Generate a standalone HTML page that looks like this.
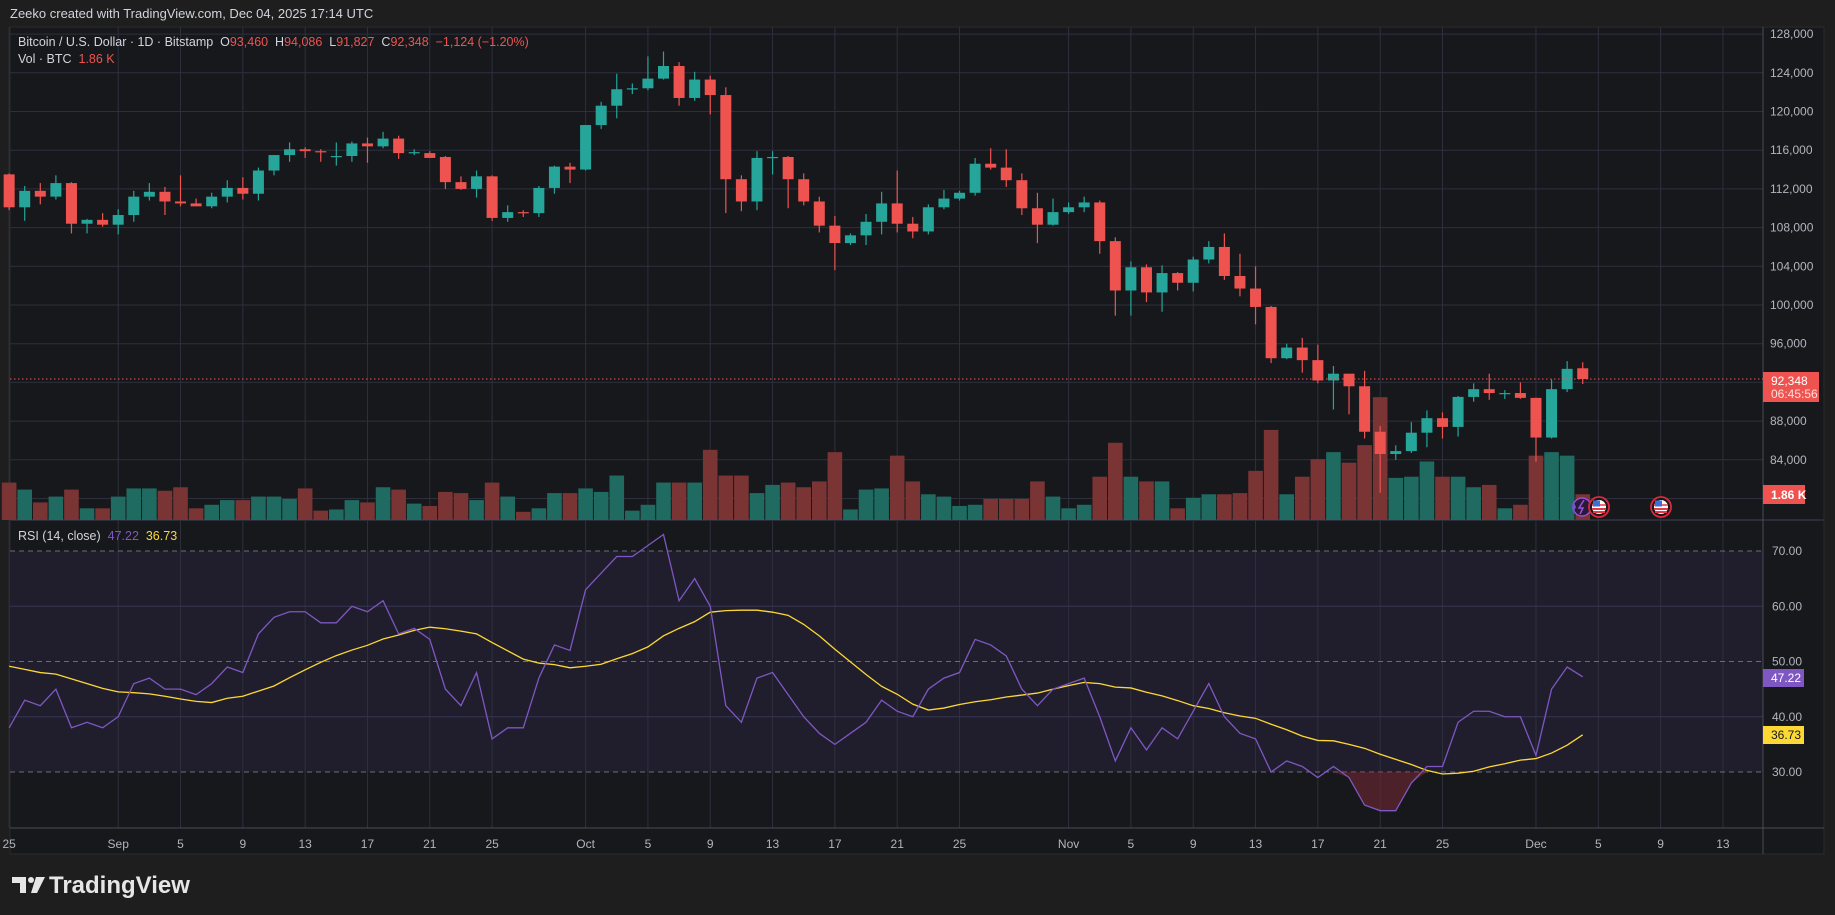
<!DOCTYPE html>
<html><head><meta charset="utf-8"><style>
html,body{margin:0;padding:0;background:#1e1e1e;width:1835px;height:915px;overflow:hidden;font-family:"Liberation Sans",sans-serif}
svg{position:absolute;left:0;top:0}
text{white-space:pre}
</style></head><body>
<svg id="s" width="1835" height="915" xmlns="http://www.w3.org/2000/svg" font-family="Liberation Sans, sans-serif"></svg>
<script>
const S=document.getElementById('s');let h='';
const X=d=>118.2+15.58*d, Y=p=>305+(100000-p*1000)*0.009675, R=v=>551+(70-v)*5.525;
h+='<rect x="0" y="0" width="1835" height="915" fill="#1e1e1e"/>';
h+='<text x="10" y="18" font-size="13" fill="#d1d4dc">Zeeko created with TradingView.com, Dec 04, 2025 17:14 UTC</text>';
h+='<rect x="10" y="27" width="1814" height="827" fill="#17181c" stroke="#2a2b30"/>';
h+=`<rect x="10" y="551" width="1753" height="221" fill="#201e2d"/>`;
const labs=[[-7,'25'],[0,'Sep'],[4,'5'],[8,'9'],[12,'13'],[16,'17'],[20,'21'],[24,'25'],[30,'Oct'],[34,'5'],[38,'9'],[42,'13'],[46,'17'],[50,'21'],[54,'25'],[61,'Nov'],[65,'5'],[69,'9'],[73,'13'],[77,'17'],[81,'21'],[85,'25'],[91,'Dec'],[95,'5'],[99,'9'],[103,'13']];
labs.forEach(([d,t])=>{const x=X(d);h+=`<line x1="${x}" y1="27" x2="${x}" y2="828" stroke="#2e2f3d"/>`;h+=`<text x="${x}" y="848" font-size="12" fill="#b2b5be" text-anchor="middle">${t}</text>`;});
for(let p=84;p<=128;p+=4){const y=Y(p);h+=`<line x1="10" y1="${y}" x2="1763" y2="${y}" stroke="#2e2f3d"/>`;h+=`<text x="1770" y="${y+4}" font-size="12" fill="#b2b5be">${p},000</text>`;}
h+=`<line x1="10" y1="${Y(80)}" x2="1763" y2="${Y(80)}" stroke="#2e2f3d"/>`;
[60,40].forEach(v=>{h+=`<line x1="10" y1="${R(v)}" x2="1763" y2="${R(v)}" stroke="#363452"/>`});
[70,50,30].forEach(v=>{h+=`<line x1="10" y1="${R(v)}" x2="1763" y2="${R(v)}" stroke="#6b6b80" stroke-dasharray="5,4"/>`});
[70,60,50,40,30].forEach(v=>{h+=`<text x="1772" y="${R(v)+4}" font-size="12" fill="#b2b5be">${v}.00</text>`});
h+='<line x1="10" y1="520" x2="1824" y2="520" stroke="#2a2e39" stroke-width="2"/>';
h+='<line x1="10" y1="828" x2="1824" y2="828" stroke="#4a4d57"/>';
h+='<line x1="1763" y1="27" x2="1763" y2="854" stroke="#4a4d57"/>';
const D=`113.5 113.6 109.8 110.1|110.1 112.3 108.7 111.8|111.8 112.6 110.4 111.2|111.2 113.4 110.9 112.6|112.6 112.7 107.4 108.4|108.4 108.9 107.4 108.8|108.8 109.5 108.1 108.3|108.3 109.9 107.3 109.3|109.3 111.8 108.6 111.2|111.2 112.6 110.8 111.7|111.7 112.2 109.3 110.7|110.7 113.4 110.2 110.5|110.5 111 110.2 110.2|110.2 111.6 110 111.2|111.2 112.9 110.6 112.1|112.1 113.2 110.9 111.5|111.5 114.2 110.8 113.9|113.9 115.5 113.4 115.5|115.5 116.8 114.8 116.1|116.1 116.3 115.2 115.9|115.9 116.1 114.8 115.8|115.3 116.8 114.4 115.4|115.4 116.9 114.8 116.7|116.7 117.3 114.7 116.4|116.4 117.9 116.2 117.2|117.2 117.5 115.1 115.7|115.7 116.1 115.5 115.8|115.7 115.9 115.2 115.2|115.3 115.4 112 112.7|112.7 113.3 111.9 112|112 113.9 111.1 113.3|113.3 113.4 108.7 109|109 110.3 108.6 109.6|109.6 109.8 109.1 109.5|109.5 112.3 109.1 112.1|112.1 114.4 111.5 114.3|114.3 114.7 112.6 114|114 118.6 113.9 118.6|118.6 121 118.2 120.6|120.6 123.9 119.3 122.3|122.3 122.9 121.8 122.4|122.4 125.7 122.2 123.4|123.4 126.2 123.3 124.7|124.7 125.1 120.6 121.4|121.4 124.1 121.1 123.3|123.3 123.7 119.7 121.7|121.7 122.5 109.5 113|113 113.4 109.7 110.7|110.7 115.9 109.8 115.2|115.2 115.9 113.5 115.3|115.3 115.4 110 113|113 113.6 110.3 110.7|110.7 111.2 107.5 108.2|108.2 109.2 103.6 106.4|106.4 107.4 106.2 107.2|107.2 109.4 106.2 108.6|108.6 111.7 107.3 110.5|110.5 113.9 107.5 108.4|108.4 109.1 106.9 107.6|107.6 110.4 107.3 110.1|110.1 111.9 109.9 111|111 111.8 110.8 111.6|111.6 115.2 111.3 114.6|114.6 116.2 114 114.2|114.2 116.1 112.2 112.9|112.9 113.6 109.3 110|110 111.6 106.4 108.3|108.3 111 108.2 109.6|109.6 110.6 109.4 110.1|110.1 111.2 109.6 110.6|110.6 110.8 105.3 106.6|106.6 107 98.9 101.5|101.5 104.5 98.9 103.9|103.9 104.2 100.3 101.3|101.3 104.1 99.3 103.3|103.3 103.4 101.5 102.3|102.3 105 101.4 104.7|104.7 106.6 104.3 106|106 107.4 102.6 103|103 105.3 100.9 101.7|101.7 104 98 99.8|99.8 99.9 94 94.5|94.5 96 94.4 95.6|95.6 96.6 93 94.3|94.3 95.9 91.9 92.2|92.2 93.7 89.2 92.9|92.9 92.9 88.7 91.6|91.6 93.2 86.2 86.9|86.9 87.5 80.6 84.6|84.6 85.5 84 84.9|84.9 87.9 84.7 86.8|86.8 89.1 85.3 88.3|88.3 88.9 86.2 87.4|87.4 90.6 86.4 90.5|90.5 91.9 90 91.3|91.3 92.9 90.2 90.9|90.9 91.2 90.3 90.9|90.9 92 90.3 90.4|90.4 90.4 83.8 86.3|86.3 92.3 86.2 91.3|91.3 94.2 91 93.4|93.46 94.086 91.827 92.348`.split('|').map(s=>s.trim().split(/\s+/).map(Number));
const V=[32,26,15,20,26,10,10,20,27,27,25,28,10,13,17,17,20,20,18,27,8,9,17,15,28,26,14,12,24,23,17,32,20,7,10,23,23,27,24,38,8,13,32,32,32,60,38,38,23,30,32,28,33,58,9,26,27,55,33,22,20,12,13,18,18,18,33,20,10,13,37,66,37,33,33,10,19,22,22,23,42,77,22,37,52,58,49,64,105,36,37,50,37,37,28,30,10,13,55,58,55,22];
D.forEach((c,i)=>{const d=i-7,x=X(d);const up=c[3]>=c[0];const hh=V[i]*1.17;h+=`<rect x="${x-7.3}" y="${520-hh}" width="14.6" height="${hh}" fill="${up?'#1f6b61':'#7a3434'}"/>`;});
D.forEach((c,i)=>{const d=i-7,x=X(d);const up=c[3]>=c[0];const col=up?'#26a69a':'#ef5350';
h+=`<line x1="${x}" y1="${Y(c[1])}" x2="${x}" y2="${Y(c[2])}" stroke="${col}" stroke-width="1.2"/>`;
const t=Y(Math.max(c[0],c[3])),b=Y(Math.min(c[0],c[3]));h+=`<rect x="${x-5.5}" y="${t}" width="11" height="${Math.max(1.2,b-t)}" fill="${col}"/>`;});
h+=`<line x1="10" y1="${Y(92.348)}" x2="1763" y2="${Y(92.348)}" stroke="#ef5350" stroke-dasharray="1.5,2.5"/>`;
h+=`<rect x="1763" y="372" width="56" height="30" fill="#ef5350"/><text x="1771" y="385" font-size="12" fill="#fff">92,348</text><text x="1771" y="398" font-size="12" fill="#fde0df">06:45:56</text>`;
h+=`<rect x="1763" y="485" width="42" height="19" fill="#ef5350"/><text x="1771" y="499" font-size="12" font-weight="bold" fill="#fff">1.86 K</text>`;
const RS=[38,43,42,45,38,39,38,40,46,47,45,45,44,46,49,48,55,58,59,59,57,57,60,59,61,55,56,54,45,42,48,36,38,38,47,53,52,63,66,69,69,71,73,61,65,60,42,39,47,48,44,40,37,35,37,39,43,41,40,45,47,48,54,53,51,45,42,45,46,47,40,32,38,34,38,36,41,46,40,37,36,30,32,31,29,31,29,24,23,23,28,31,31,39,41,41,40,40,33,45,49,47.22];
const pad=[52,51,50,49,50,51,50,49,48,50,51,52,50,49];const all=pad.concat(RS);
const MA=RS.map((v,i)=>{let s=0;for(let k=0;k<14;k++)s+=all[i+14-k];return s/14;});
MA[MA.length-1]=36.73;
let pts=[];RS.forEach((v,i)=>{if(i>=85&&i<=92)pts.push([X(i-7),R(Math.min(v,30))]);});
h+=`<path d="M${pts[0][0]},${R(30)} ${pts.map(p=>'L'+p[0]+','+p[1]).join(' ')} L${pts[pts.length-1][0]},${R(30)}Z" fill="#7a2a35" opacity="0.55"/>`;
h+=`<polyline fill="none" stroke="#fdd835" stroke-width="1.3" points="${MA.map((v,i)=>X(i-7)+','+R(v)).join(' ')}"/>`;
h+=`<polyline fill="none" stroke="#7e57c2" stroke-width="1.3" points="${RS.map((v,i)=>X(i-7)+','+R(v)).join(' ')}"/>`;
h+=`<rect x="1763" y="669" width="41" height="18" fill="#7e57c2"/><text x="1771" y="682" font-size="12" fill="#fff">47.22</text>`;
h+=`<rect x="1763" y="726" width="41" height="18" fill="#fdd835"/><text x="1771" y="739" font-size="12" fill="#131722">36.73</text>`;
h+=`<text x="18" y="46" font-size="12.5" fill="#d1d4dc">Bitcoin / U.S. Dollar · 1D · Bitstamp  O<tspan fill="#ef5350">93,460</tspan>  H<tspan fill="#ef5350">94,086</tspan>  L<tspan fill="#ef5350">91,827</tspan>  C<tspan fill="#ef5350">92,348</tspan>  <tspan fill="#ef5350">−1,124 (−1.20%)</tspan></text>`;
h+=`<text x="18" y="63" font-size="12.5" fill="#d1d4dc">Vol · BTC  <tspan fill="#ef5350">1.86 K</tspan></text>`;
h+=`<text x="18" y="540" font-size="12.5" fill="#d1d4dc">RSI (14, close)  <tspan fill="#7e57c2">47.22</tspan>  <tspan fill="#fdd835">36.73</tspan></text>`;
h+=`<circle cx="1582" cy="507" r="9" fill="#2a1a3a" stroke="#9c4fd6" stroke-width="1.5"/><path d="M1584,500 L1579,508 L1583,508 L1580,514" stroke="#9c4fd6" fill="none" stroke-width="1.5"/><path d="M1572,507 l2,-4 l2,4 l-2,4z" fill="#7b4fe0"/>`;
[1599,1661].forEach(x=>{h+=`<circle cx="${x}" cy="507" r="10" fill="#17181c" stroke="#e0283a" stroke-width="1.8"/><circle cx="${x}" cy="507" r="7" fill="#fff"/><path d="M${x-7},509 h14 M${x-6},512 h12" stroke="#e63946" stroke-width="2"/><path d="M${x-7},505 h14" stroke="#e63946" stroke-width="1.5"/><path d="M${x-6},500.5 h7 v6 h-7z" fill="#3a6fd8"/>`;});
h+=`<g fill="#e6e6e6"><path d="M12,877 h14 v16 h-6 v-10 h-8z"/><circle cx="31" cy="880" r="3"/><path d="M36,877 h9 l-8,16 h-6z"/></g><text x="49" y="893" font-size="24" font-weight="bold" fill="#e6e6e6">TradingView</text>`;
S.innerHTML=h;
</script>
</body></html>
